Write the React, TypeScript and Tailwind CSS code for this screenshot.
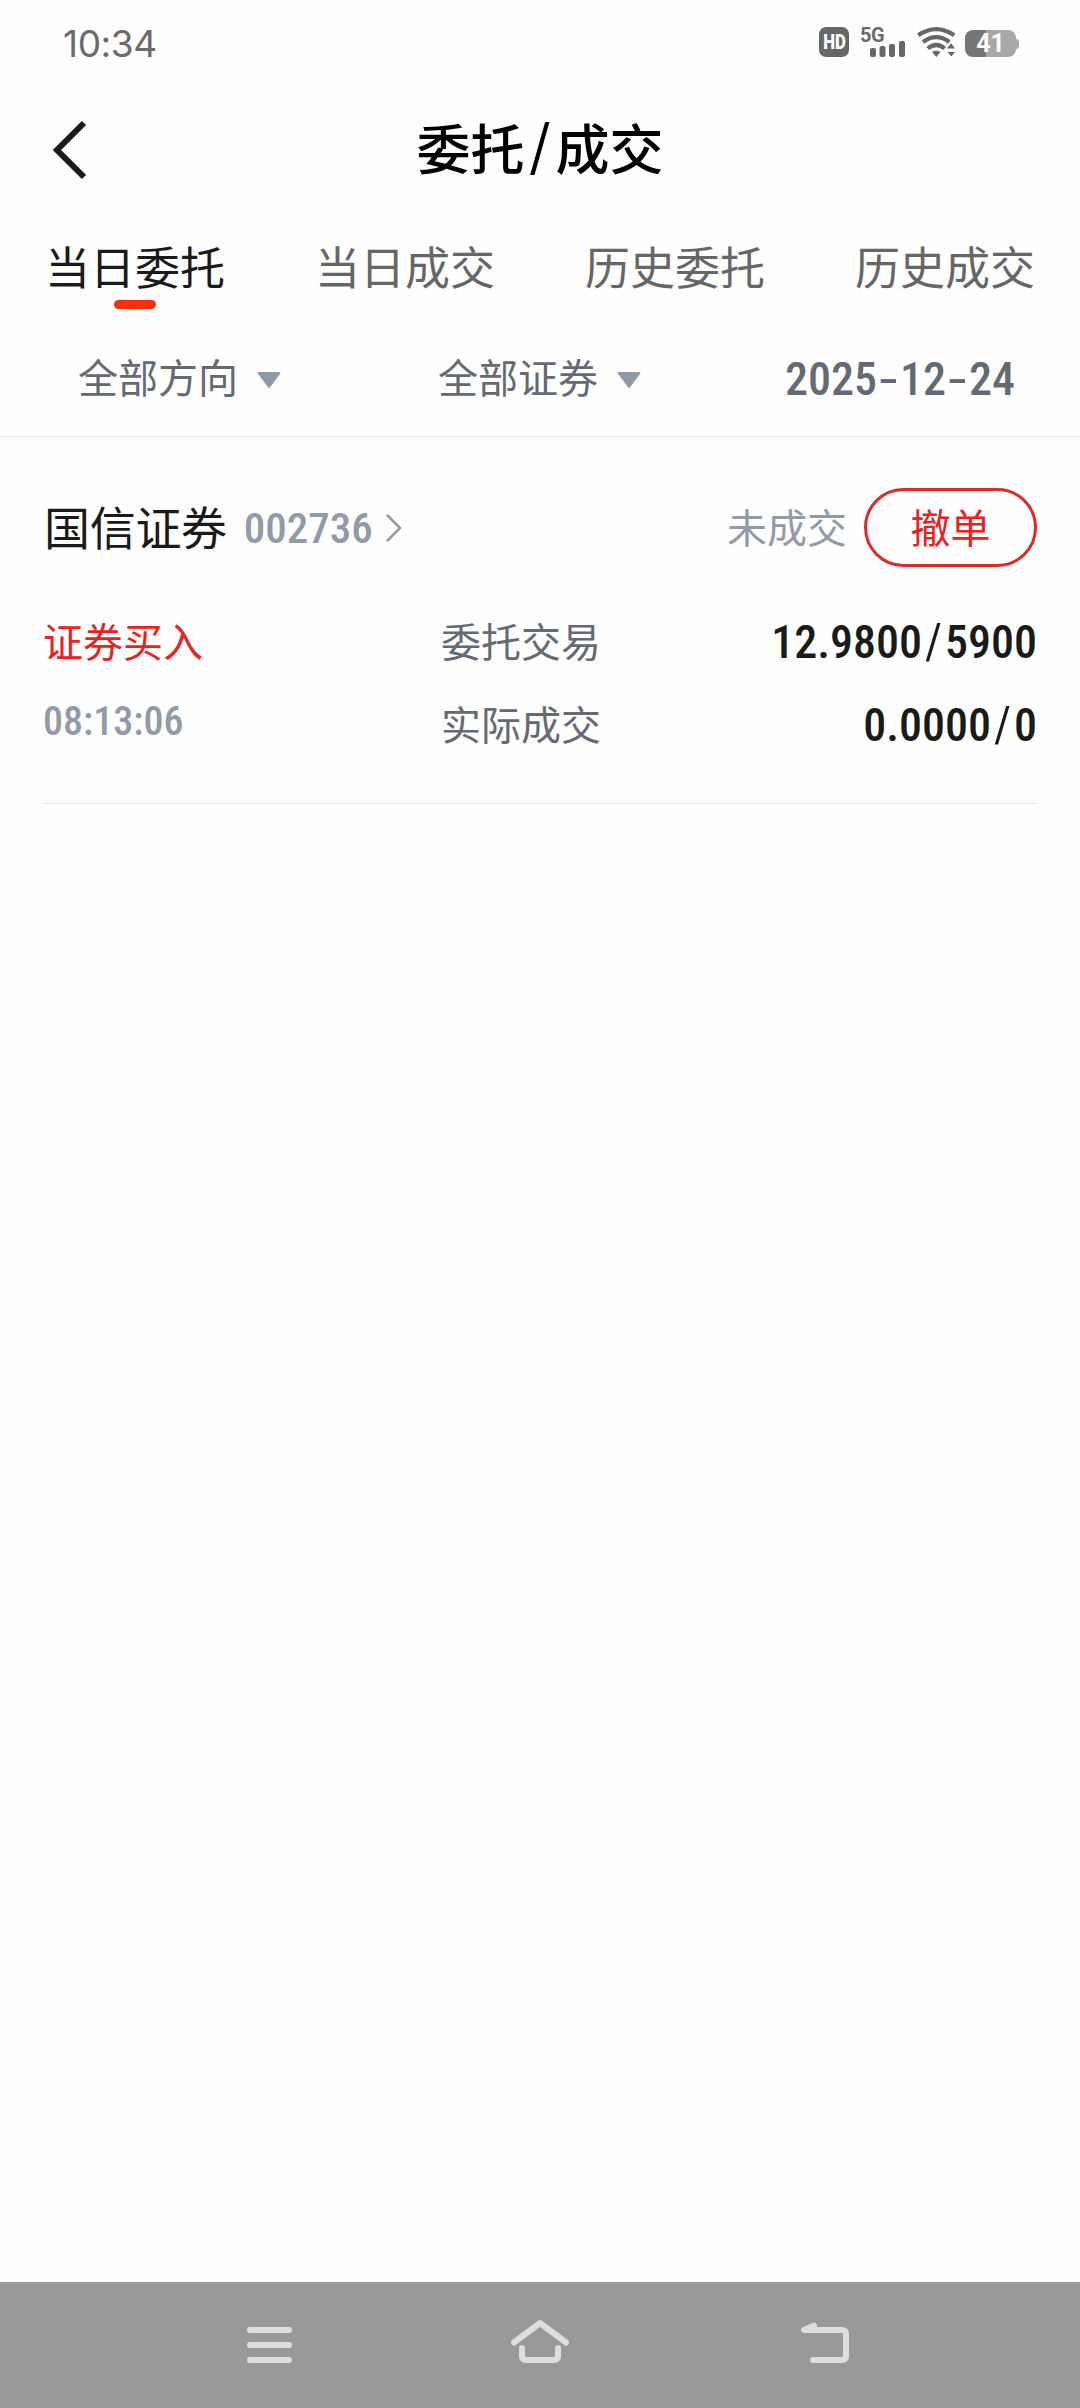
import React from "react";

type Order = {
  name: string;
  code: string;
  status: string;
  side: string;
  time: string;
  ordered: [string, string];
  filled: [string, string];
};

const tabs = ["当日委托", "当日成交", "历史委托", "历史成交"];
const filters = ["全部方向", "全部证券"];
const date = ["2025", "12", "24"];

const orders: Order[] = [
  {
    name: "国信证券",
    code: "002736",
    status: "未成交",
    side: "证券买入",
    time: "08:13:06",
    ordered: ["12.9800", "5900"],
    filled: ["0.0000", "0"],
  },
];

function StatusBar() {
  return (
    <div className="flex h-[88px] items-start justify-between pl-[63px] pr-[61px] text-[#6b6b6b]">
      <div className="mt-[22px] font-[Inter,sans-serif] text-[37px] leading-[44px] tracking-[-0.4px]">10:34</div>
      <div className="mt-[26px] flex h-8 items-start">
        <div className="mt-px flex h-[30px] w-[30px] items-center justify-center rounded-[7px] bg-[#676767] font-[Roboto,sans-serif] text-[20px] font-black leading-none text-white">
          <span className="scale-x-[0.84]">HD</span>
        </div>
        <div className="relative ml-3 h-8 w-11">
          <span className="absolute left-[-1px] top-0 font-[Roboto,sans-serif] text-[20px] font-bold leading-[18px] tracking-[-0.5px]">5G</span>
          <svg className="absolute inset-0" width="44" height="32" fill="#676767">
            <rect x="9" y="22" width="6" height="9" rx="2" />
            <rect x="18.500" y="20" width="6" height="11" rx="2" />
            <rect x="28" y="18" width="6" height="13" rx="2" />
            <rect x="38" y="15" width="6" height="16" rx="2" />
          </svg>
        </div>
        <svg className="ml-[11px]" width="41" height="32" viewBox="0 0 41 32" fill="none" stroke="#676767" strokeWidth="4.200">
          <path d="M2.200 9.200Q20.200 -3 38.200 9.200M7 16Q20.200 6.200 33.400 16M11.800 22.500Q20.200 15.500 28.600 22.500" />
          <path d="M16 26q4.200-2.500 8.500 0l-4.200 5z" fill="#676767" stroke="none" />
          <path d="M30 23l5-6.500 5 6.500zM30.500 25.500h9.500l-4.700 5.500z" fill="#676767" stroke="#fefefe" strokeWidth="1" />
        </svg>
        <div className="ml-[8px] mt-1 flex items-center">
          <div className="flex h-[27px] w-[51px] items-center justify-center rounded-[8px] bg-linear-to-r from-[#767676] from-[41%] to-[#a8a8a8] to-[41%] font-[Roboto,sans-serif] text-[25px] font-bold leading-none text-white">
            41
          </div>
          <div className="h-[10px] w-[3px] rounded-r-full bg-[#a8a8a8]" />
        </div>
      </div>
    </div>
  );
}

function Header() {
  return (
    <header className="flex h-[124px] items-center justify-between px-[53px]">
      <svg width="34" height="60" viewBox="0 0 34 60" fill="none" stroke="#1a1a1a" strokeWidth="6">
        <path d="M31 3L4 30l27 27" />
      </svg>
      <h1 className="pb-[6px] text-[54px] font-medium leading-none text-black">
        委托<span className="mx-[5px] inline-block -translate-y-[5px]">/</span>成交
      </h1>
      <div className="w-[34px]" />
    </header>
  );
}

function Tabs() {
  return (
    <nav className="grid h-[109px] grid-cols-4">
      {tabs.map((tab, i) => (
        <div key={tab} className="flex flex-col items-center pt-[27px]">
          <div className={`text-[45px] leading-[54px] ${i === 0 ? "text-[#1a1a1a]" : "text-[#666]"}`}>{tab}</div>
          {i === 0 ? <div className="mt-[7px] h-[9px] w-[42px] rounded-full bg-[#f5300d]" /> : null}
        </div>
      ))}
    </nav>
  );
}

function Filters() {
  return (
    <div className="grid h-[116px] grid-cols-3 items-center border-b border-[#e6e6e6] text-[#656973]">
      {filters.map((label) => (
        <div key={label} className="flex items-center justify-center gap-[19px] pr-px">
          <span className="pb-[6px] text-[40px] leading-[48px]">{label}</span>
          <svg className="mt-[3px]" width="24" height="16" viewBox="0 0 24 16" fill="#9099a7">
            <path d="M1.500 0h21q1.500 0.500 0.500 2L13 15.300q-1 1-2 0L1 2Q0 0.500 1.500 0z" />
          </svg>
        </div>
      ))}
      <div className="text-center font-[Roboto,sans-serif] text-[46px] font-medium leading-[48px] [font-stretch:87%]">
        {date.map((part, i) => (
          <React.Fragment key={i}>
            {i > 0 ? <span className="inline-block w-[23px] scale-x-[1.5] scale-y-90 text-center">-</span> : null}
            {part}
          </React.Fragment>
        ))}
      </div>
    </div>
  );
}

function Amount({ value }: { value: [string, string] }) {
  return (
    <>
      {value[0]}
      <span className="inline-block w-[23px] -translate-y-px scale-y-110 text-center font-normal">/</span>
      {value[1]}
    </>
  );
}

function OrderItem({ order }: { order: Order }) {
  return (
    <section className="mx-[43px] h-[367px] border-b border-[#e6e6e6] pt-[51px]">
      <div className="flex h-[79px] items-center">
        <span className="ml-px pb-[5px] text-[46px] leading-[56px] tracking-[-0.3px] text-[#1a1a1a]">{order.name}</span>
        <span className="ml-[17px] font-[Roboto,sans-serif] text-[43px] font-medium leading-[50px] text-[#929aa7] [font-stretch:87%]">{order.code}</span>
        <svg className="ml-3" width="18" height="30" viewBox="0 0 18 30" fill="none" stroke="#999" strokeWidth="2.500">
          <path d="M2 2l13 13L2 28" />
        </svg>
        <span className="ml-auto pb-1 text-[40px] leading-[48px] text-[#929aa7]">{order.status}</span>
        <button className="ml-[17px] h-[79px] w-[173px] rounded-full border-3 border-[#db2b2b] pb-1 text-[40px] leading-[48px] text-[#ec2020]">撤单</button>
      </div>
      <div className="mt-[34px] grid grid-cols-[398px_1fr_auto] text-[40px]">
        <span className="h-[82px] leading-[78px] text-[#e82222]">{order.side}</span>
        <span className="h-[82px] leading-[78px] text-[#656973]">委托交易</span>
        <span className="h-[82px] text-right font-[Roboto,sans-serif] text-[46px] font-medium leading-[82px] text-[#1a1a1a] [font-stretch:87%]">
          <Amount value={order.ordered} />
        </span>
        <span className="h-[82px] font-[Roboto,sans-serif] font-medium leading-[78px] text-[#929aa7] [font-stretch:87%]">{order.time}</span>
        <span className="h-[82px] leading-[80px] text-[#656973]">实际成交</span>
        <span className="h-[82px] text-right font-[Roboto,sans-serif] text-[46px] font-medium leading-[84px] text-[#1a1a1a] [font-stretch:87%]">
          <Amount value={order.filled} />
        </span>
      </div>
    </section>
  );
}

function NavBar() {
  return (
    <footer className="mt-auto flex h-[126px] items-center justify-between bg-[#999] px-[220px]">
      <svg width="80" height="60" viewBox="-20 0 80 60" fill="none" stroke="#dedede" strokeWidth="6" strokeLinecap="round">
        <path d="M10 15h39M10 30h39M10 45h39" />
      </svg>
      <svg width="80" height="60" viewBox="-10 0 80 60" fill="none" stroke="#dedede" strokeWidth="6" strokeLinecap="round" strokeLinejoin="round">
        <path d="M4 27.500L30 8l26 19.500M12 33v8q0 4 4 4h28q4 0 4-4v-8" />
      </svg>
      <svg width="80" height="60" viewBox="-20 0 80 60" fill="none" stroke="#dedede" strokeWidth="6" strokeLinecap="round" strokeLinejoin="round">
        <path d="M14 10.500L4 15h38q4 0 4 4v22q0 4-4 4H13" />
        <path d="M14 10.500L4 15h8z" fill="#dedede" strokeWidth="4" />
      </svg>
    </footer>
  );
}

export default function App() {
  return (
    <div className="flex h-[2408px] w-[1080px] flex-col bg-[#fefefe] font-['Noto_Sans_CJK_SC',sans-serif]">
      <StatusBar />
      <Header />
      <Tabs />
      <Filters />
      {orders.map((order) => (
        <OrderItem key={order.code} order={order} />
      ))}
      <NavBar />
    </div>
  );
}
